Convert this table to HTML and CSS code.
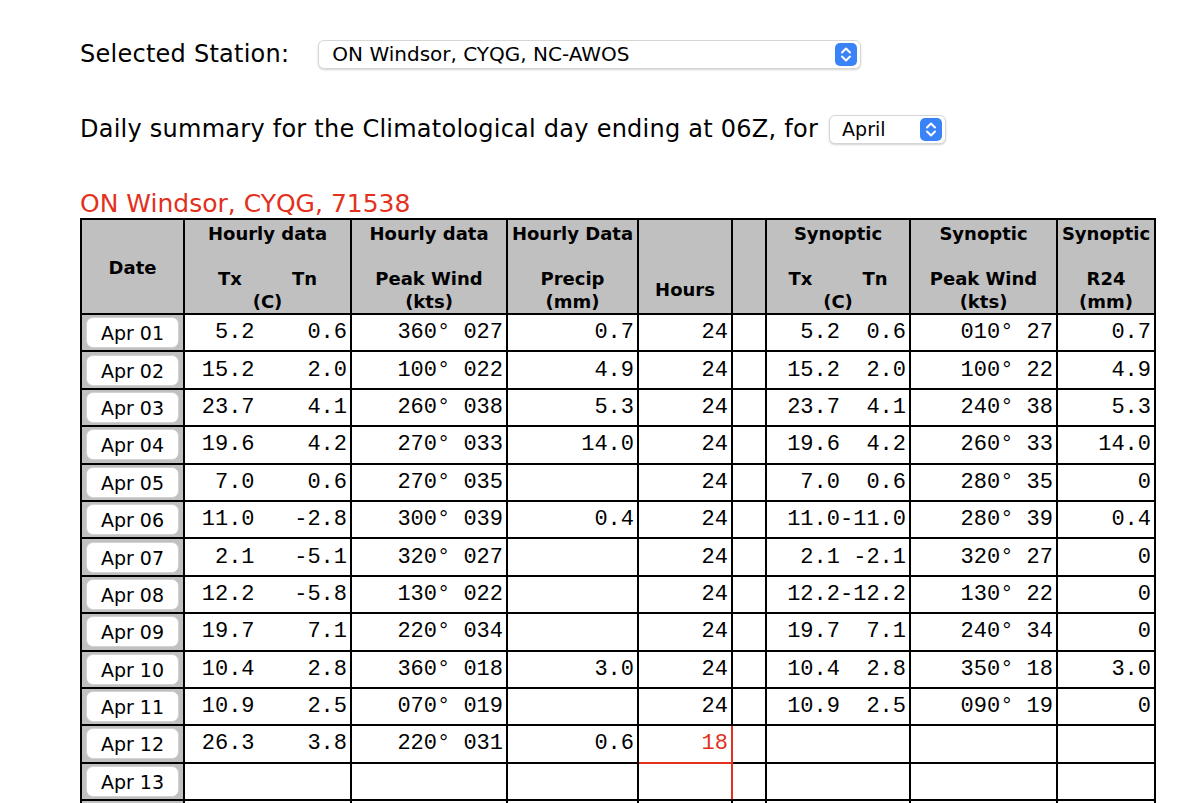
FILE: index.html
```html
<!DOCTYPE html>
<html>
<head>
<meta charset="utf-8">
<title>Daily summary</title>
<link rel="stylesheet" href="styles.css">
</head>
<body>
<div class="page">
  <div class="line station-line">
    <span class="label">Selected Station:</span>
    <div class="select station-select">
      <span class="select-text">ON Windsor, CYQG, NC-AWOS</span>
      <span class="arrow"><svg width="22" height="23" viewBox="0 0 22 23"><path d="M7 9.5 L11 5.5 L15 9.5 M7 13.5 L11 17.5 L15 13.5" fill="none" stroke="#fff" stroke-width="2" stroke-linecap="round" stroke-linejoin="round"/></svg></span>
    </div>
  </div>
  <div class="line summary-line">
    <span class="label">Daily summary for the Climatological day ending at 06Z, for</span>
    <div class="select month-select">
      <span class="select-text">April</span>
      <span class="arrow"><svg width="22" height="23" viewBox="0 0 22 23"><path d="M7 9.5 L11 5.5 L15 9.5 M7 13.5 L11 17.5 L15 13.5" fill="none" stroke="#fff" stroke-width="2" stroke-linecap="round" stroke-linejoin="round"/></svg></span>
    </div>
  </div>
  <div class="title">ON Windsor, CYQG, 71538</div>
  <table class="data">
    <colgroup>
      <col class="c-date"><col class="c-txtn"><col class="c-wind"><col class="c-precip"><col class="c-hours"><col class="c-gap"><col class="c-stxtn"><col class="c-swind"><col class="c-r24">
    </colgroup>
    <thead>
      <tr>
        <th>Date</th>
        <th>Hourly data<br><br><span class="pair"><span>Tx</span><span>Tn</span></span><br>(C)</th>
        <th>Hourly data<br><br>Peak Wind<br>(kts)</th>
        <th>Hourly Data<br><br>Precip<br>(mm)</th>
        <th><br><br>Hours</th>
        <th></th>
        <th>Synoptic<br><br><span class="pair"><span>Tx</span><span>Tn</span></span><br>(C)</th>
        <th>Synoptic<br><br>Peak Wind<br>(kts)</th>
        <th>Synoptic<br><br>R24<br>(mm)</th>
      </tr>
    </thead>
    <tbody>
      <tr><td class="date"><span class="btn">Apr 01</span></td><td>5.2    0.6</td><td>360° 027</td><td>0.7</td><td>24</td><td></td><td> 5.2  0.6</td><td>010° 27</td><td>0.7</td></tr>
      <tr><td class="date"><span class="btn">Apr 02</span></td><td>15.2    2.0</td><td>100° 022</td><td>4.9</td><td>24</td><td></td><td>15.2  2.0</td><td>100° 22</td><td>4.9</td></tr>
      <tr><td class="date"><span class="btn">Apr 03</span></td><td>23.7    4.1</td><td>260° 038</td><td>5.3</td><td>24</td><td></td><td>23.7  4.1</td><td>240° 38</td><td>5.3</td></tr>
      <tr><td class="date"><span class="btn">Apr 04</span></td><td>19.6    4.2</td><td>270° 033</td><td>14.0</td><td>24</td><td></td><td>19.6  4.2</td><td>260° 33</td><td>14.0</td></tr>
      <tr><td class="date"><span class="btn">Apr 05</span></td><td>7.0    0.6</td><td>270° 035</td><td></td><td>24</td><td></td><td> 7.0  0.6</td><td>280° 35</td><td>0</td></tr>
      <tr><td class="date"><span class="btn">Apr 06</span></td><td>11.0   -2.8</td><td>300° 039</td><td>0.4</td><td>24</td><td></td><td>11.0-11.0</td><td>280° 39</td><td>0.4</td></tr>
      <tr><td class="date"><span class="btn">Apr 07</span></td><td>2.1   -5.1</td><td>320° 027</td><td></td><td>24</td><td></td><td> 2.1 -2.1</td><td>320° 27</td><td>0</td></tr>
      <tr><td class="date"><span class="btn">Apr 08</span></td><td>12.2   -5.8</td><td>130° 022</td><td></td><td>24</td><td></td><td>12.2-12.2</td><td>130° 22</td><td>0</td></tr>
      <tr><td class="date"><span class="btn">Apr 09</span></td><td>19.7    7.1</td><td>220° 034</td><td></td><td>24</td><td></td><td>19.7  7.1</td><td>240° 34</td><td>0</td></tr>
      <tr><td class="date"><span class="btn">Apr 10</span></td><td>10.4    2.8</td><td>360° 018</td><td>3.0</td><td>24</td><td></td><td>10.4  2.8</td><td>350° 18</td><td>3.0</td></tr>
      <tr><td class="date"><span class="btn">Apr 11</span></td><td>10.9    2.5</td><td>070° 019</td><td></td><td>24</td><td></td><td>10.9  2.5</td><td>090° 19</td><td>0</td></tr>
      <tr><td class="date"><span class="btn">Apr 12</span></td><td>26.3    3.8</td><td>220° 031</td><td>0.6</td><td class="today">18</td><td></td><td></td><td></td><td></td></tr>
      <tr><td class="date"><span class="btn">Apr 13</span></td><td></td><td></td><td></td><td class="next"></td><td></td><td></td><td></td><td></td></tr>
      <tr><td class="date"><span class="btn">Apr 14</span></td><td></td><td></td><td></td><td></td><td></td><td></td><td></td><td></td></tr>
      <tr><td class="date"><span class="btn">Apr 15</span></td><td></td><td></td><td></td><td></td><td></td><td></td><td></td><td></td></tr>
      <tr><td class="date"><span class="btn">Apr 16</span></td><td></td><td></td><td></td><td></td><td></td><td></td><td></td><td></td></tr>
    </tbody>
  </table>
</div>
</body>
</html>
```
FILE: styles.css
```css
html, body {
  margin: 0;
  padding: 0;
  background: #fff;
  color: #000;
}
body {
  font-family: "DejaVu Sans", "Liberation Sans", sans-serif;
}
.page {
  padding: 38px 0 40px 80px;
}
.line {
  display: flex;
  align-items: center;
  height: 32px;
}
.label {
  font-size: 24px;
  letter-spacing: 0.25px;
}
.station-line .label {
  margin-right: 29px;
}
.summary-line {
  margin-top: 43px;
}
.summary-line .label {
  margin-right: 11px;
}
.select {
  display: flex;
  align-items: center;
  justify-content: space-between;
  height: 29px;
  box-sizing: border-box;
  border: 1px solid #d6d6d6;
  border-radius: 6px;
  background: #fff;
  box-shadow: 0 1px 2px rgba(0, 0, 0, 0.18);
  padding: 0 3px 0 13px;
}
.station-select {
  width: 543px;
}
.month-select {
  width: 117px;
  padding-left: 12px;
}
.select-text {
  font-size: 20px;
}
.month-select .select-text {
  font-size: 19px;
}
.arrow {
  display: flex;
  width: 22px;
  height: 23px;
  border-radius: 5px;
  background: #3a82f7;
}
.title {
  margin-top: 46px;
  font-size: 25px;
  line-height: 26px;
  color: #e2311d;
}
.data {
  margin-top: 1px;
  border-collapse: collapse;
  table-layout: fixed;
  width: 1074px;
  border: 2px solid #000;
}
.c-date { width: 103px; }
.c-txtn { width: 167px; }
.c-wind { width: 156px; }
.c-precip { width: 131px; }
.c-hours { width: 94px; }
.c-gap { width: 34px; }
.c-stxtn { width: 144px; }
.c-swind { width: 147px; }
.c-r24 { width: 98px; }
.data th, .data td {
  border: 2px solid #000;
}
.data th {
  background: #c0c0c0;
  font-weight: bold;
  font-size: 18px;
  line-height: 22.5px;
  height: 93px;
  padding: 3px 0 0;
  box-sizing: border-box;
  text-align: center;
  vertical-align: middle;
}
.pair {
  display: inline-flex;
  gap: 50px;
}
.data td {
  height: 35.4px;
  padding: 0 3px 0 0;
  text-align: right;
  vertical-align: middle;
  font-family: "Liberation Mono", monospace;
  font-size: 22px;
  white-space: pre;
}
.data td.date {
  background: #c0c0c0;
  padding: 0 4px;
  text-align: center;
}
.btn {
  display: block;
  height: 31px;
  line-height: 31px;
  box-sizing: border-box;
  border: 1px solid #d2d2d2;
  border-radius: 7px;
  background: #fff;
  font-family: "DejaVu Sans", "Liberation Sans", sans-serif;
  font-size: 19px;
  white-space: nowrap;
}
.data td.today {
  color: #e2311d;
  border-right-color: #e2311d;
  border-bottom-color: #e2311d;
}
.data td.next {
  border-left-color: #e2311d;
  border-right-color: #e2311d;
}
```
